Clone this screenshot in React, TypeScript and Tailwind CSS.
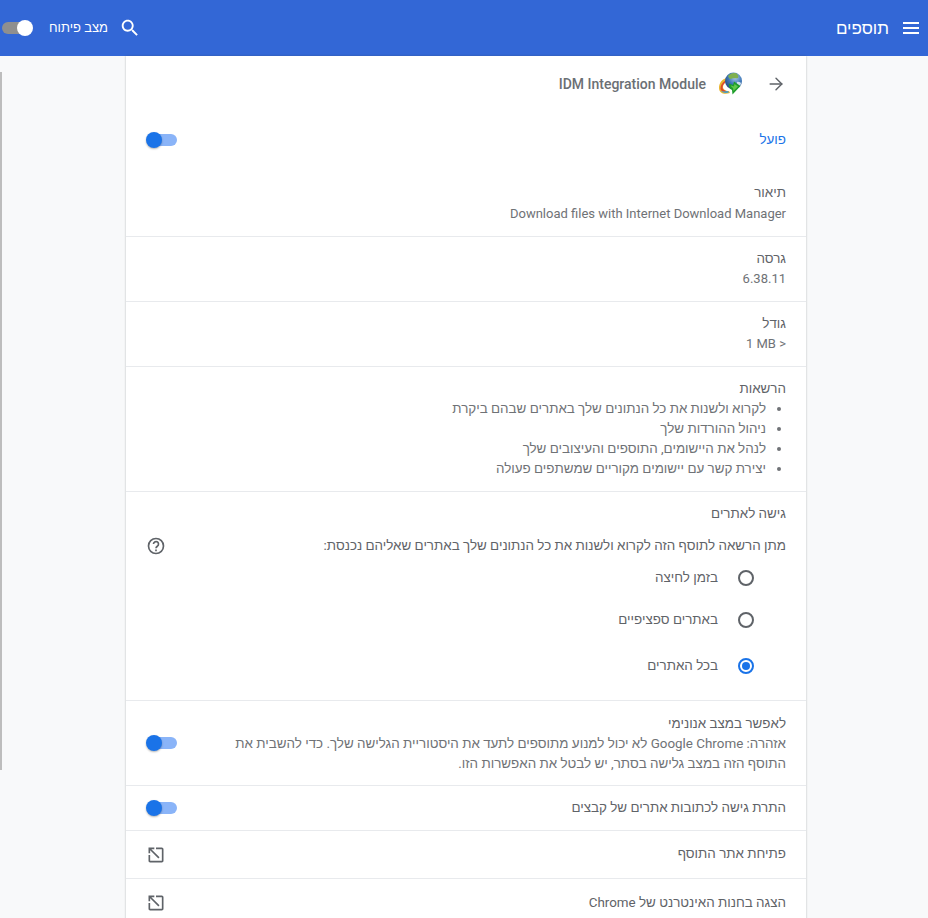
import React from "react";
import { ArrowRight } from "lucide-react";

const font = "font-['Roboto','Liberation_Sans',sans-serif]";

const Toggle = ({ className = "" }: { className?: string }) => (
  <div className={"relative h-[16px] w-[31px] shrink-0 " + className} dir="ltr">
    <div className="absolute left-[3px] top-[2px] h-[12px] w-[28px] rounded-full bg-[#8ab4f8]" />
    <div className="absolute left-0 top-0 h-[16px] w-[16px] rounded-full bg-[#1a73e8] shadow-[0_1px_2px_rgba(0,0,0,0.3)]" />
  </div>
);

const OpenIcon = () => (
  <svg width="20" height="20" viewBox="0 0 24 24" fill="#5f6368" className="shrink-0 -scale-x-100">
    <path d="M19 19H5V5h7V3H5c-1.110 0-2 .9-2 2v14c0 1.100.89 2 2 2h14c1.100 0 2-.9 2-2v-7h-2v7zM14 3v2h3.590l-9.830 9.830 1.410 1.410L19 6.410V10h2V3h-7z" />
  </svg>
);

// IDM logo: globe with rainbow swoosh and a green arrow
const IdmIcon = () => (
  <svg width="26" height="26" viewBox="0 0 26 26" className="shrink-0">
    <defs>
      <radialGradient id="globe" cx="0.6" cy="0.3" r="0.8">
        <stop offset="0" stopColor="#a9c9ea" />
        <stop offset="0.5" stopColor="#3f78b8" />
        <stop offset="1" stopColor="#1c3f74" />
      </radialGradient>
    </defs>
    <path d="M1 17c0-5 3-9 8-10l1 3c-3 1-5 3-5 6 0 2 2 4 6 4l1 2c-6 2-11 0-11-5z" fill="#e9b52f" />
    <path d="M2.500 17.500c0-3 1.500-6 5-8l.5 1.500c-2 1.500-3.500 3-3.500 5.500 0 2 2 3.500 6 4-4 1-8 0-8-3z" fill="#d9482f" />
    <path d="M3 20c2 2 5 2.500 8 1.500l-1-1.500c-3 .5-5 .5-7 0z" fill="#3fa0d0" />
    <circle cx="15.500" cy="10" r="8.500" fill="url(#globe)" />
    <path d="M10 5c2-2.500 6-3.500 8.500-2.500 1.500 1 2.500 3 1.500 4.500-2.500 1-4.500-.5-6 .5-1.500 1-3 .5-4-2.500z" fill="#7fb04f" />
    <path d="M19 11c2-.5 4 .5 4 1.500-.5 2-2.500 3.500-3.500 3-1-1-1-3-.5-4.500z" fill="#cfe0ee" />
    <path d="M11 12.500l4 1.500 1-3.500 6.500 4.500-8 8.500-.5-4.500c-2.500-1-3.500-3.500-3-6.500z" fill="#1f9e2c" />
    <path d="M13 14.500l3 1 .5-2.500 3.500 2.500-4.500 4.500-.5-3c-1-.5-2-1.500-2-2.500z" fill="#62c84a" />
  </svg>
);

const Radio = ({ on }: { on?: boolean }) => (
  <div
    className={
      "flex h-[16px] w-[16px] shrink-0 items-center justify-center rounded-full border-2 " +
      (on ? "border-[#1a73e8]" : "border-[#5f6368]")
    }
  >
    {on && <div className="h-[8px] w-[8px] rounded-full bg-[#1a73e8]" />}
  </div>
);

const InfoRow = ({ title, children, first }: { title: string; children: React.ReactNode; first?: boolean }) => (
  <div className={"flex flex-col border-b border-[#e8eaed] px-5 " + (first ? "h-[69px] pt-[15px]" : "h-[65px] pt-[12px]")}>
    <div className="text-[13.4px] leading-[20px] text-[#5f6368]">{title}</div>
    <div className={"text-[13px] leading-[20px] text-[#6f7276] " + (first ? "mt-[1px]" : "")}>{children}</div>
  </div>
);

const RadioRow = ({ label, on, className }: { label: string; on?: boolean; className: string }) => (
  <div className={"flex h-[20px] items-center gap-[20px] pr-[32px] text-[13.4px] text-[#5f6368] " + className}>
    <Radio on={on} />
    <span>{label}</span>
  </div>
);

const perms = [
  "לקרוא ולשנות את כל הנתונים שלך באתרים שבהם ביקרת",
  "ניהול ההורדות שלך",
  "לנהל את היישומים, התוספים והעיצובים שלך",
  "יצירת קשר עם יישומים מקוריים שמשתפים פעולה",
];

export default function App() {
  return (
    <div dir="rtl" className={"relative h-[918px] overflow-hidden bg-[#f8f9fa] " + font}>
      <header className="flex h-[56px] items-center justify-between bg-[#3367d6] pl-[1px] pr-[9px] text-white">
        <div className="flex items-center gap-[14px]">
          <svg width="16" height="12" viewBox="0 0 16 12" fill="currentColor" className="shrink-0">
            <rect y="0" width="16" height="2" />
            <rect y="5" width="16" height="2" />
            <rect y="10" width="16" height="2" />
          </svg>
          <span className="text-[17px] leading-none">תוספים</span>
        </div>
        <div className="flex items-center">
          <svg width="22" height="22" viewBox="0 0 24 24" fill="currentColor" className="ml-[11px] shrink-0">
            <path d="M15.500 14h-.79l-.28-.27C15.410 12.590 16 11.110 16 9.500 16 5.910 13.090 3 9.500 3S3 5.910 3 9.500 5.910 16 9.500 16c1.610 0 3.090-.59 4.230-1.570l.27.28v.79l5 4.990L20.490 19l-4.990-5zm-6 0C7.010 14 5 11.990 5 9.500S7.010 5 9.500 5 14 7.010 14 9.500 11.990 14 9.500 14z" />
          </svg>
          <span className="ml-[16px] text-[13px]">מצב פיתוח</span>
          <div className="relative h-[16px] w-[32px]" dir="ltr">
            <div className="absolute left-[1px] top-[2px] h-[12px] w-[28px] rounded-full bg-[#8f8f8f]" />
            <div className="absolute left-[16px] top-0 h-[16px] w-[16px] rounded-full bg-white" />
          </div>
        </div>
      </header>

      {/* sliver of the sidebar scrollbar at the left edge */}
      <div className="absolute left-0 top-[72px] h-[698px] w-[2px] bg-[#bdbdbd]" />

      <main className="ml-[126px] mr-auto w-[680px] bg-white text-[#5f6368] shadow-[0_0_2px_rgba(60,64,67,0.35)]">
        <div className="flex h-[56px] items-center px-5">
          <ArrowRight size={20} strokeWidth={1.700} className="ml-[22px] shrink-0 text-[#5f6368]" />
          <IdmIcon />
          <span dir="ltr" className="mr-[12px] text-[14px] font-medium text-[#6b6f74]">
            IDM Integration Module
          </span>
        </div>

        <div className="flex h-[56px] items-center justify-between px-5">
          <span className="text-[13.4px] text-[#1a73e8]">פועל</span>
          <Toggle />
        </div>

        <InfoRow first title="תיאור">
          <span dir="ltr">Download files with Internet Download Manager</span>
        </InfoRow>
        <InfoRow title="גרסה">6.38.11</InfoRow>
        <InfoRow title="גודל">
          <span dir="ltr">1 MB &gt;</span>
        </InfoRow>

        <div className="flex h-[125px] flex-col justify-center border-b border-[#e8eaed] px-5">
          <div className="text-[13.4px] leading-[20px] text-[#5f6368]">הרשאות</div>
          <ul className="list-disc pr-[20px] text-[13.4px] leading-[20px] text-[#6f7276]">
            {perms.map((p) => (
              <li key={p}>{p}</li>
            ))}
          </ul>
        </div>

        <div className="flex h-[209px] flex-col border-b border-[#e8eaed] px-5 pt-[12px]">
          <div className="text-[13.4px] leading-[20px] text-[#5f6368]">גישה לאתרים</div>
          <div className="mt-[12px] flex h-[20px] items-center justify-between text-[13.4px] text-[#5f6368]">
            <span>מתן הרשאה לתוסף הזה לקרוא ולשנות את כל הנתונים שלך באתרים שאליהם נכנסת:</span>
            <svg width="20" height="20" viewBox="0 0 24 24" fill="none" stroke="#5f6368" strokeWidth="2" className="shrink-0">
              <circle cx="12" cy="12" r="9" />
              <path d="M9 9.700a3 3 0 1 1 4.800 2.400c-1 .8-1.800 1.300-1.800 2.700" />
              <path d="M12 16.200v2" />
            </svg>
          </div>
          <RadioRow className="mt-[12px]" label="בזמן לחיצה" />
          <RadioRow className="mt-[22px]" label="באתרים ספציפיים" />
          <RadioRow className="mt-[26px]" label="בכל האתרים" on />
        </div>

        <div className="flex h-[85px] items-center justify-between border-b border-[#e8eaed] px-5 pt-[1px]">
          <div className="w-[565px]">
            <div className="text-[13.4px] leading-[20px] text-[#5f6368]">לאפשר במצב אנונימי</div>
            <div className="text-[13.4px] leading-[20px] text-[#6f7276]">
              אזהרה: Google Chrome לא יכול למנוע מתוספים לתעד את היסטוריית הגלישה שלך. כדי להשבית את התוסף הזה במצב גלישה בסתר, יש לבטל את האפשרות הזו.
            </div>
          </div>
          <Toggle className="-mt-[1px]" />
        </div>

        <div className="flex h-[45px] items-center justify-between border-b border-[#e8eaed] px-5 pt-[1px] text-[13.4px] text-[#5f6368]">
          <span>התרת גישה לכתובות אתרים של קבצים</span>
          <Toggle className="-mt-[1px]" />
        </div>
        <div className="flex h-[48px] items-center justify-between border-b border-[#e8eaed] px-5 text-[13.4px] text-[#5f6368]">
          <span>פתיחת אתר התוסף</span>
          <OpenIcon />
        </div>
        <div className="flex h-[48px] items-center justify-between px-5 text-[13.4px] text-[#5f6368]">
          <span>הצגה בחנות האינטרנט של Chrome</span>
          <OpenIcon />
        </div>
      </main>
    </div>
  );
}
